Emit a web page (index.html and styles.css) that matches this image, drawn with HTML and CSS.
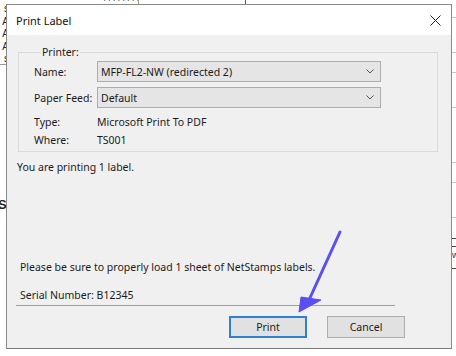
FILE: index.html
```html
<!DOCTYPE html>
<html lang="en">
<head>
<meta charset="utf-8">
<title>Print Label</title>
<link rel="stylesheet" href="styles.css">
</head>
<body>
<div class="page">
  <div class="doc-letters"><span>s</span><span>A</span><span>A</span><span>A</span><span>s</span></div>
  <div class="doc-hline"></div>
  <div class="doc-bold">S</div>
  <div class="doc-top"><span class="top-text">A A A A</span></div>
  <div class="doc-vline v1"></div>
  <div class="doc-vline v2"></div>
  <div class="doc-right">
    <i style="top:17px"></i><i style="top:52px"></i><i style="top:72px"></i><i style="top:107px"></i>
    <i style="top:162px"></i><i style="top:182px"></i><i style="top:217px"></i>
    <i class="dark" style="top:238px"></i><i class="dark" style="top:246px"></i><i class="dark" style="top:268px"></i>
    <b class="w">w</b>
  </div>

  <div class="dialog">
    <div class="titlebar">
      <span class="title">Print Label</span>
      <svg class="close" width="11" height="11" viewBox="0 0 11 11"><path d="M0.5 0.5 L10.5 10.5 M10.5 0.5 L0.5 10.5" stroke="#222" stroke-width="1" fill="none"/></svg>
    </div>
    <div class="body">
      <div class="group">
        <div class="legend">Printer:</div>
        <div class="fields">
          <span class="label">Name:</span>
          <div class="select"><span>MFP-FL2-NW (redirected 2)</span><svg width="8" height="5" viewBox="0 0 8 5"><path d="M0.5 0.5 L4 4 L7.5 0.5" stroke="#555" fill="none"/></svg></div>
          <span class="label">Paper Feed:</span>
          <div class="select"><span>Default</span><svg width="8" height="5" viewBox="0 0 8 5"><path d="M0.5 0.5 L4 4 L7.5 0.5" stroke="#555" fill="none"/></svg></div>
        </div>
        <div class="info">
          <span class="label">Type:</span><span>Microsoft Print To PDF</span>
          <span class="label">Where:</span><span>TS001</span>
        </div>
      </div>
      <p class="count">You are printing 1 label.</p>
      <div class="spacer"></div>
      <p class="note">Please be sure to properly load 1 sheet of NetStamps labels.</p>
      <p class="note">Serial Number: B12345</p>
      <div class="sep"></div>
      <div class="buttons">
        <button class="btn primary">Print</button>
        <button class="btn">Cancel</button>
      </div>
    </div>
  </div>

  <svg class="arrow" width="456" height="356" viewBox="0 0 456 356">
    <path d="M340 232 L309 300" stroke="#5a4ff2" stroke-width="3" stroke-linecap="round" fill="none"/>
    <path d="M299 312 L301 297 L321 300 Z" fill="#5a4ff2" stroke="#5a4ff2" stroke-width="1" stroke-linejoin="round"/>
  </svg>
</div>
</body>
</html>
```

FILE: styles.css
```css
* { box-sizing: border-box; }
html, body { margin: 0; padding: 0; background: #ffffff; }
.page {
  position: relative;
  width: 456px;
  height: 356px;
  overflow: hidden;
  padding: 4px 0 0 6px;
  font-family: "Noto Sans", "Open Sans", sans-serif;
  color: #1b1b1b;
}

/* underlying document peeking out */
.doc-letters {
  position: absolute;
  left: -3px;
  top: 3px;
  width: 12px;
  display: flex;
  flex-direction: column;
  align-items: flex-end;
  font: 10px/12.5px "Liberation Sans", sans-serif;
  color: #222;
}
.doc-hline { position: absolute; left: 0; top: 64px; width: 7px; height: 1px; background: #9a9a9a; }
.doc-bold { position: absolute; left: -2px; top: 197px; font: bold 13px/16px "Liberation Sans", sans-serif; color: #222; }
.doc-top { position: absolute; left: 104px; top: -6px; font: 9px/9px "Liberation Sans", sans-serif; color: #444; letter-spacing: 1px; }
.doc-vline { position: absolute; top: 0; width: 1px; height: 5px; }
.doc-vline.v1 { left: 138px; background: #9a9a9a; }
.doc-vline.v2 { left: 245px; background: #555; }
.doc-right { position: absolute; left: 452px; top: 0; width: 4px; height: 356px; }
.doc-right i { position: absolute; left: 0; width: 4px; height: 1px; background: #c4c4c4; }
.doc-right i.dark { background: #444; }
.doc-right .w { position: absolute; left: 0; top: 250px; font: 9px/10px "Liberation Sans", sans-serif; color: #334; font-weight: normal; }

/* dialog */
.dialog {
  position: relative;
  z-index: 1;
  width: 446px;
  height: 345px;
  border: 1px solid #8a8a8a;
  border-bottom-color: #7a7a7a;
  background: #f0f0f0;
  display: flex;
  flex-direction: column;
}
.titlebar {
  height: 30px;
  background: #ffffff;
  display: flex;
  align-items: center;
  justify-content: space-between;
  padding: 0 10px 0 9px;
}
.title { font-size: 11px; color: #111; padding-top: 1px; }
.close { display: block; margin-top: 0; }

.body {
  flex: 1;
  display: flex;
  flex-direction: column;
  padding: 17px 13px 10px 11px;
  font-size: 10.5px;
}
.group {
  border: 1px solid #dadada;
  padding: 0 0 2px 15px;
}
.legend {
  margin: -8px 0 0 7px;
  width: fit-content;
  padding: 0 1px;
  line-height: 15px;
  background: #f0f0f0;
}
.fields {
  margin-top: 1px;
  display: grid;
  grid-template-columns: 63px 284px;
  grid-auto-rows: 21px;
  row-gap: 5px;
  align-items: center;
}
.select {
  height: 21px;
  border: 1px solid #adadad;
  background: #e5e5e5;
  display: flex;
  align-items: center;
  justify-content: space-between;
  padding: 0 6px 0 3px;
}
.info {
  margin-top: 5px;
  display: grid;
  grid-template-columns: 63px 284px;
  grid-auto-rows: 18px;
  align-items: center;
}
p { margin: 0; }
.count { margin: 6px 0 0 -1px; line-height: 18px; }
.spacer { flex: 1; }
.note { line-height: 18px; padding-left: 2px; }
.note + .note { margin-top: 10px; }
.sep { margin: 1px 0 0 -2px; width: 379px; height: 1px; background: #a0a0a0; }
.buttons {
  margin-top: 10px;
  display: flex;
  justify-content: flex-end;
  gap: 20px;
  padding-right: 33px;
}
.btn {
  width: 78px;
  height: 22px;
  border: 1px solid #adadad;
  background: #e1e1e1;
  font-family: "Noto Sans", "Open Sans", sans-serif;
  font-size: 10.5px;
  color: #1b1b1b;
  padding: 0;
}
.btn.primary { border-color: #2f7fd6; box-shadow: inset 0 0 0 1px #2f7fd6; }

.arrow { position: absolute; left: 0; top: 0; z-index: 2; pointer-events: none; }
```
